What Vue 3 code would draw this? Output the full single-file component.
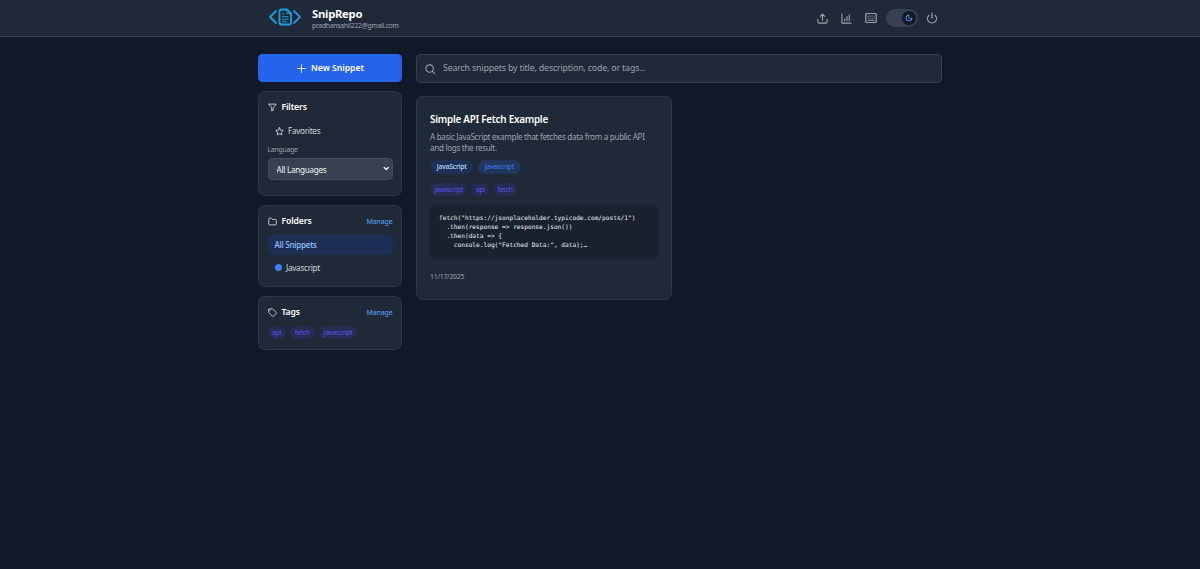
<template>
  <div class="app">
    <header class="header">
      <div class="header-inner">
        <div class="brand">
          <svg class="logo" viewBox="0 0 64 36" fill="none" stroke-width="3.6">
            <path class="logo-left" d="M14 6 2 18l12 12" />
            <path class="logo-right" d="M50 6l12 12-12 12" />
            <path class="logo-doc" d="M36 3H25a4 4 0 0 0-4 4v22a4 4 0 0 0 4 4h15a4 4 0 0 0 4-4V11z" />
            <path class="logo-doc" stroke-width="2.2" d="M36 3v8h8M27 12h3M27 17.500h11M27 22.500h11M27 27.500h8" />
          </svg>
          <div class="brand-text">
            <h1>SnipRepo</h1>
            <p>pradhansahil222@gmail.com</p>
          </div>
        </div>

        <div class="actions">
          <button type="button" class="icon-btn" title="Export">
            <svg class="icon" viewBox="0 0 24 24">
              <path d="M2 14v5a3 3 0 0 0 3 3h14a3 3 0 0 0 3-3v-5M12 16V3M7 7.500l5-5 5 5" />
            </svg>
          </button>
          <button type="button" class="icon-btn" title="Statistics">
            <svg class="icon" viewBox="0 0 24 24">
              <path d="M2 2v20h20M8 17v-4M13 17V8M18 17V4" />
            </svg>
          </button>
          <button type="button" class="icon-btn keyboard" title="Shortcuts">
            <svg class="icon" viewBox="0 0 24 24">
              <rect x="1.500" y="3" width="21" height="18" rx="2" />
              <path d="M6 8h.1M10 8h.1M14 8h.1M18 8h.1M6 12h.1M10 12h.1M14 12h.1M18 12h.1M6 16.500h12" />
            </svg>
          </button>
          <button
            type="button"
            class="toggle"
            :class="{ on: darkMode }"
            title="Theme"
            @click="darkMode = !darkMode"
          >
            <span class="knob">
              <svg viewBox="0 0 24 24">
                <path d="M12 3a6 6 0 0 0 9 9 9 9 0 1 1-9-9z" />
              </svg>
            </span>
          </button>
          <button type="button" class="icon-btn power" title="Sign out">
            <svg class="icon" viewBox="0 0 24 24">
              <path d="M12 2v10M18.400 6.600a9 9 0 1 1-12.800 0" />
            </svg>
          </button>
        </div>
      </div>
    </header>

    <div class="layout">
      <aside class="sidebar">
        <button type="button" class="new-btn">
          <svg class="icon" viewBox="0 0 24 24"><path d="M12 2v20M2 12h20" /></svg>
          <span>New Snippet</span>
        </button>

        <section class="panel filters">
          <div class="panel-head">
            <svg class="icon" viewBox="0 0 24 24">
              <path d="M2 3h20l-8 9.500V19l-4 2.500v-9z" />
            </svg>
            <h2>Filters</h2>
          </div>
          <button type="button" class="favorites">
            <svg class="icon" viewBox="0 0 24 24">
              <path d="M12 2l3.100 6.300 6.900 1-5 4.900 1.200 6.800-6.200-3.200L5.800 21 7 14.200 2 9.300l6.900-1z" />
            </svg>
            <span>Favorites</span>
          </button>
          <label for="language">Language</label>
          <div class="select-wrap">
            <select id="language" v-model="language">
              <option value="">All Languages</option>
              <option value="javascript">JavaScript</option>
            </select>
            <svg class="chevron" viewBox="0 0 12 8"><path d="M1.500 1.500 6 6l4.500-4.500" /></svg>
          </div>
        </section>

        <section class="panel folders">
          <div class="panel-head">
            <svg class="icon" viewBox="0 0 24 24">
              <path d="M2 5a2 2 0 0 1 2-2h5l3 3.500h8a2 2 0 0 1 2 2V19a2 2 0 0 1-2 2H4a2 2 0 0 1-2-2z" />
            </svg>
            <h2>Folders</h2>
            <a class="manage">Manage</a>
          </div>
          <div class="folder active">All Snippets</div>
          <div v-for="folder in folders" :key="folder" class="folder">
            <span class="dot"></span>{{ folder }}
          </div>
        </section>

        <section class="panel tags">
          <div class="panel-head">
            <svg class="icon" viewBox="0 0 24 24">
              <path d="M2 4v7.500a2 2 0 0 0 .6 1.400l8.700 8.700a2.400 2.400 0 0 0 3.400 0l6.900-6.900a2.400 2.400 0 0 0 0-3.400l-8.700-8.700A2 2 0 0 0 11.500 2H4a2 2 0 0 0-2 2zM7 7h.1" />
            </svg>
            <h2>Tags</h2>
            <a class="manage">Manage</a>
          </div>
          <div class="tag-list">
            <span v-for="tag in tags" :key="tag" class="tag">{{ tag }}</span>
          </div>
        </section>
      </aside>

      <main class="main">
        <div class="search">
          <svg class="icon" viewBox="0 0 24 24">
            <circle cx="10.500" cy="10.500" r="8.500" />
            <path d="M17 17l5 5" />
          </svg>
          <input
            v-model="search"
            type="text"
            placeholder="Search snippets by title, description, code, or tags..."
          />
        </div>

        <article class="card">
          <h3>Simple API Fetch Example</h3>
          <p class="description">
            A basic JavaScript example that fetches data from a public API<br />and
            logs the result.
          </p>
          <div class="badges">
            <span class="badge language">JavaScript</span>
            <span class="badge folder-badge">Javascript</span>
          </div>
          <div class="tag-list">
            <span v-for="tag in snippetTags" :key="tag" class="tag">{{ tag }}</span>
          </div>
          <pre class="code">{{ code }}</pre>
          <time>11/17/2025</time>
        </article>
      </main>
    </div>
  </div>
</template>

<script setup>
import { ref } from "vue";

const darkMode = ref(true);
const language = ref("");
const search = ref("");

const folders = ["Javascript"];
const tags = ["api", "fetch", "javascript"];
const snippetTags = ["javascript", "api", "fetch"];

const code = `fetch("https://jsonplaceholder.typicode.com/posts/1")
  .then(response => response.json())
  .then(data => {
    console.log("Fetched Data:", data);…`;
</script>

<style>
body {
  margin: 0;
  background: #111827;
}
</style>

<style scoped>
* {
  box-sizing: border-box;
}

.app {
  min-height: 100vh;
  background: #111827;
  color: #fff;
  font-family: "Noto Sans", sans-serif;
  font-size: 8.1px;
  line-height: 11.25px;
  letter-spacing: -0.25px;
}

h1,
h2,
h3,
p,
pre {
  margin: 0;
}

button,
input,
select {
  font: inherit;
  letter-spacing: inherit;
  color: inherit;
  border: none;
  background: none;
  padding: 0;
  margin: 0;
}

button {
  cursor: pointer;
}

.icon {
  display: block;
  flex: none;
  width: 9px;
  height: 9px;
  fill: none;
  stroke: currentColor;
  stroke-width: 2.4;
  stroke-linecap: round;
  stroke-linejoin: round;
}

/* Header */
.header {
  height: 37px;
  background: #1f2937;
  border-bottom: 1px solid #374151;
}

.header-inner {
  display: flex;
  align-items: center;
  justify-content: space-between;
  width: 684px;
  height: 36px;
  margin: 0 auto;
  padding: 0 0 0 11px;
}

.brand {
  display: flex;
  align-items: center;
  gap: 11px;
}

.logo {
  display: block;
  width: 32px;
  height: 18px;
  margin-top: -2px;
  stroke-linecap: round;
  stroke-linejoin: round;
}

.logo-left,
.logo-doc {
  stroke: #15a5dc;
}

.logo-right {
  stroke: #2b8fe0;
}

.brand-text h1 {
  font-size: 11.25px;
  line-height: 14px;
  font-weight: 700;
  letter-spacing: -0.25px;
}

.brand-text p {
  font-size: 6.75px;
  line-height: 9px;
  letter-spacing: -0.23px;
  color: #9ca3af;
}

.actions {
  display: flex;
  align-items: center;
  color: #9ca3af;
}

.icon-btn {
  width: 24px;
  display: flex;
  justify-content: center;
}

.icon-btn .icon {
  width: 11px;
  height: 11px;
}

.icon-btn.keyboard {
  width: 28px;
  padding-right: 2px;
}

.icon-btn.keyboard .icon {
  width: 12px;
  height: 12px;
}

.icon-btn.power {
  width: 24px;
  justify-content: flex-end;
  padding-right: 4px;
}

.icon-btn.power .icon {
  width: 12px;
  height: 12px;
}

.toggle {
  display: flex;
  align-items: center;
  width: 32px;
  height: 18px;
  padding: 0 2.250px;
  border-radius: 9px;
  background: #374151;
}

.toggle.on {
  justify-content: flex-end;
}

.knob {
  display: flex;
  align-items: center;
  justify-content: center;
  width: 13.500px;
  height: 13.500px;
  border-radius: 50%;
  background: #111827;
}

.knob svg {
  width: 8px;
  height: 8px;
  fill: none;
  stroke: #60a5fa;
  stroke-width: 2.500;
  stroke-linejoin: round;
}

/* Page columns */
.layout {
  display: grid;
  grid-template-columns: 144px 526px;
  gap: 14px;
  width: 684px;
  margin: 0 auto;
  padding-top: 17px;
  align-items: start;
}

.sidebar {
  display: flex;
  flex-direction: column;
  gap: 9px;
}

.new-btn {
  display: flex;
  align-items: center;
  justify-content: center;
  gap: 5px;
  height: 28px;
  padding: 1px 0 0 1px;
  border-radius: 4.500px;
  background: #2563eb;
  font-size: 8.600px;
  font-weight: 600;
  letter-spacing: 0;
}

.panel {
  padding: 9px 8.500px 0;
  border: 1px solid #2d3847;
  border-radius: 6.750px;
  background: #1f2937;
}

.filters {
  height: 105px;
}

.folders {
  height: 82px;
}

.tags {
  height: 54px;
}

.panel-head {
  display: flex;
  align-items: center;
  height: 13px;
  gap: 5px;
}

.panel-head .icon {
  color: #d1d5db;
}

.panel-head h2 {
  flex: 1;
  font-size: 8.600px;
  font-weight: 600;
  letter-spacing: -0.1px;
}

.manage {
  font-size: 7px;
  letter-spacing: -0.150px;
  color: #60a5fa;
}

.favorites {
  display: flex;
  align-items: center;
  gap: 4.500px;
  height: 18px;
  margin-top: 8px;
  padding-left: 7px;
  color: #d1d5db;
}

label {
  display: block;
  margin-top: 5px;
  font-size: 6.900px;
  line-height: 9px;
  color: #9ca3af;
}

.select-wrap {
  position: relative;
  margin-top: 4px;
}

.select-wrap select {
  appearance: none;
  display: block;
  width: 100%;
  height: 22px;
  padding: 1px 0 0 8px;
  border: 1px solid #434d5c;
  border-radius: 4.500px;
  background: #374151;
  color: #f3f4f6;
}

.chevron {
  position: absolute;
  right: 3px;
  top: 8px;
  width: 6.500px;
  height: 5px;
  fill: none;
  stroke: #fff;
  stroke-width: 2.400;
}

.folder {
  display: flex;
  align-items: center;
  height: 20px;
  padding-left: 7px;
  margin-top: 2.500px;
  border-radius: 4.500px;
  color: #d1d5db;
}

.folder.active {
  margin-top: 7px;
  background: #1e2f55;
  color: #93c5fd;
  font-weight: 500;
}

.dot {
  width: 7px;
  height: 7px;
  margin-right: 4.500px;
  border-radius: 50%;
  background: #3b82f6;
}

.tag-list {
  display: flex;
  gap: 4.500px;
}

.tags .tag-list {
  margin-top: 7px;
}

.tag {
  height: 13px;
  padding: 0 4.500px;
  border-radius: 7px;
  background: #262c52;
  color: #5b54ea;
  font-size: 6.900px;
  line-height: 13px;
  letter-spacing: -0.2px;
}

/* Search */
.search {
  display: flex;
  align-items: center;
  gap: 7.500px;
  height: 29px;
  padding: 1px 8px 0;
  border: 1px solid #374151;
  border-radius: 4.500px;
  background: #1f2937;
  color: #9ca3af;
}

.search .icon {
  width: 10.500px;
  height: 10.500px;
}

.search input {
  flex: 1;
  font-size: 8.800px;
  letter-spacing: -0.160px;
  outline: none;
}

.search input::placeholder {
  color: #9ca3af;
}

/* Snippet card */
.card {
  width: 256px;
  height: 204px;
  margin-top: 13px;
  padding: 16px 13px 0;
  border: 1px solid #2d3847;
  border-radius: 6.750px;
  background: #1f2937;
}

.card h3 {
  font-size: 9.900px;
  line-height: 13px;
  font-weight: 600;
  letter-spacing: -0.250px;
}

.description {
  margin-top: 5px;
  letter-spacing: -0.310px;
  color: #9ca3af;
  white-space: nowrap;
}

.badges {
  display: flex;
  gap: 4.500px;
  margin-top: 6.500px;
}

.badge {
  height: 14px;
  padding: 0 6.750px;
  border-radius: 7px;
  font-size: 6.900px;
  line-height: 14px;
}

.language {
  background: #1e3055;
  color: #bfdbfe;
  font-weight: 500;
}

.folder-badge {
  background: #22355b;
  color: #3b82f6;
  letter-spacing: -0.170px;
}

.card .tag-list {
  gap: 4px;
  margin-top: 8.500px;
}

.card .tag {
  padding: 0 4.250px;
}

.code {
  height: 54px;
  margin-top: 9px;
  padding: 8px 9px;
  border-radius: 4.500px;
  background: #19212f;
  color: #f3f4f6;
  font-family: "DejaVu Sans Mono", monospace;
  font-size: 6.160px;
  line-height: 9.150px;
  letter-spacing: 0;
}

time {
  display: block;
  margin-top: 13.500px;
  font-size: 6.900px;
  line-height: 9px;
  color: #9ca3af;
}
</style>
